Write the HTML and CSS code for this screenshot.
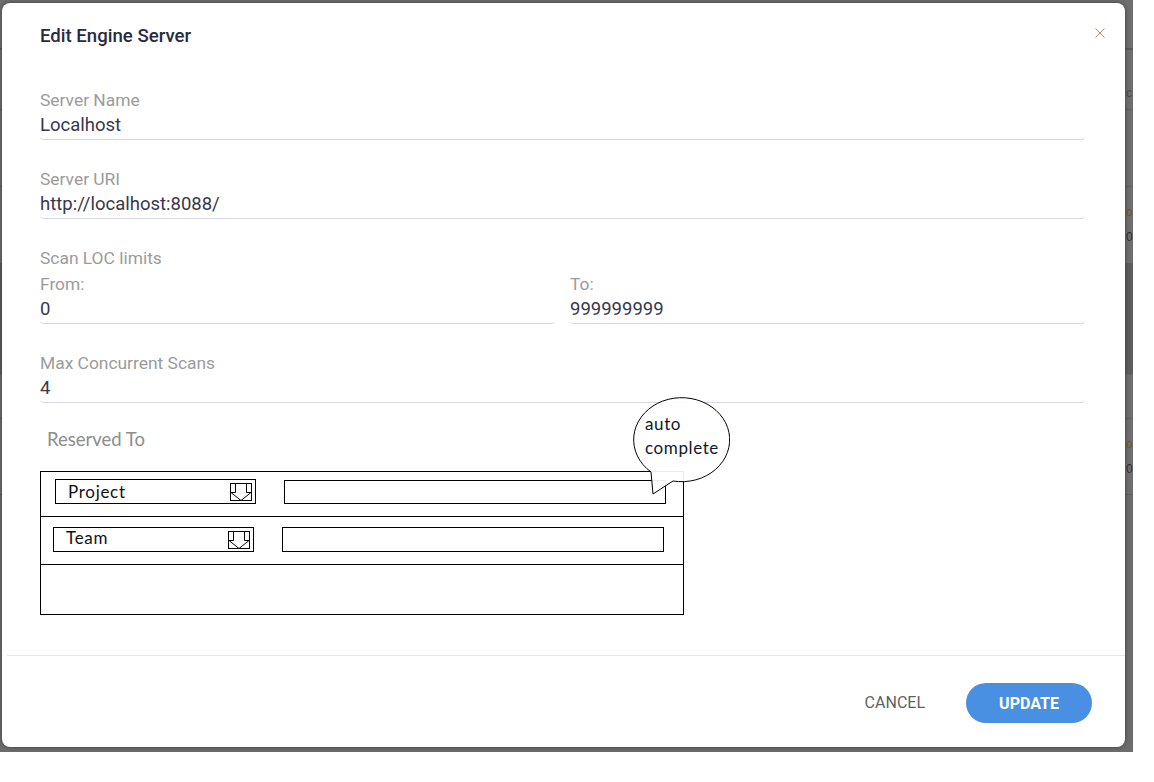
FILE: index.html
```html
<!DOCTYPE html>
<html lang="en">
<head>
<meta charset="utf-8">
<title>Edit Engine Server</title>
<link rel="stylesheet" href="styles.css">
</head>
<body>
<div class="screen">
  <div class="page">
    <div class="pg-head"></div>
    <div class="pg-row pg-r1"><span class="pg-gap"></span><span class="pg-txt t-gray">c</span></div>
    <div class="pg-row pg-r2"></div>
    <div class="pg-row pg-r3"><span class="pg-gap"></span><span class="pg-txt"><span class="t-or">o</span><br><span class="t-bl">0</span></span></div>
    <div class="pg-dark"></div>
    <div class="pg-row pg-r4"></div>
    <div class="pg-row pg-r5"><span class="pg-gap"></span><span class="pg-txt"><span class="t-or">o</span><br><span class="t-bl">0</span></span></div>
  </div>

  <div class="dialog">
    <div class="dlg-head">
      <h2 class="dlg-title">Edit Engine Server</h2>
      <button class="dlg-close" aria-label="Close">
        <svg width="10" height="10" viewBox="0 0 10 10"><path d="M0.5 0.5 L9.5 9.5 M9.5 0.5 L0.5 9.5" stroke="#bf8a68" stroke-width="1" fill="none"/></svg>
      </button>
    </div>

    <div class="dlg-body">
      <div class="field">
        <div class="f-label">Server Name</div>
        <div class="f-input">Localhost</div>
      </div>
      <div class="field">
        <div class="f-label">Server URI</div>
        <div class="f-input">http://localhost:8088/</div>
      </div>
      <div class="field">
        <div class="f-label">Scan LOC limits</div>
        <div class="f-cols">
          <div class="f-col">
            <div class="f-sublabel">From:</div>
            <div class="f-input">0</div>
          </div>
          <div class="f-col">
            <div class="f-sublabel">To:</div>
            <div class="f-input">999999999</div>
          </div>
        </div>
      </div>
      <div class="field">
        <div class="f-label">Max Concurrent Scans</div>
        <div class="f-input">4</div>
      </div>

      <div class="reserved">
        <div class="res-label">Reserved To</div>
        <div class="wire">
          <div class="w-row w-row1">
            <div class="w-select"><span class="w-sel-text">Project</span>
              <svg class="w-arrow" width="22" height="18" viewBox="0 0 22 18"><rect x="0.5" y="0.5" width="21" height="17" fill="none" stroke="#000"/><path d="M5.5 1 V9.5 H1 L11 17.5 L21 9.5 H16.5 V1" fill="none" stroke="#000"/></svg>
            </div>
            <div class="w-text"></div>
          </div>
          <div class="w-row w-row2">
            <div class="w-select"><span class="w-sel-text up">Team</span>
              <svg class="w-arrow" width="22" height="18" viewBox="0 0 22 18"><rect x="0.5" y="0.5" width="21" height="17" fill="none" stroke="#000"/><path d="M5.5 1 V9.5 H1 L11 17.5 L21 9.5 H16.5 V1" fill="none" stroke="#000"/></svg>
            </div>
            <div class="w-text"></div>
          </div>
          <div class="w-row w-row3"></div>
        </div>
        <div class="bubble">
          <svg width="100" height="100" viewBox="0 0 100 100"><path d="M21 76 L23 98 L43 85 A48 42 0 1 0 21 76 Z" fill="rgba(255,255,255,0.92)" stroke="#000" stroke-width="1"/></svg>
          <div class="bubble-text">auto<br>complete</div>
        </div>
      </div>
    </div>

    <div class="dlg-foot">
      <button class="btn-cancel">CANCEL</button>
      <button class="btn-update">UPDATE</button>
    </div>
  </div>
</div>
</body>
</html>
```

FILE: styles.css
```css
html, body {
  margin: 0;
  padding: 0;
  background: #ffffff;
}

.screen {
  position: relative;
  width: 1133px;
  height: 752px;
  background: #6c6c6c;
  overflow: hidden;
}

/* dimmed page behind the modal */
.page {
  width: 1133px;
  font-family: "Liberation Sans", Arial, sans-serif;
  font-size: 12px;
}
.pg-head {
  height: 48px;
  background: #6e6e6e;
  border-bottom: 2px solid #5a5a5a;
}
.pg-row {
  display: flex;
  border-bottom: 1px solid #5e5e5e;
  background: #6e6e6e;
}
.pg-gap {
  flex: 0 0 1126px;
}
.pg-txt {
  line-height: 25px;
  white-space: nowrap;
}
.pg-r1 { height: 59px; }
.pg-r1 .pg-txt { line-height: 16px; padding-top: 35px; }
.pg-r2 { height: 76px; }
.pg-r3 { height: 63px; padding-top: 13px; }
.pg-dark {
  height: 110px;
  background: #5d5d5d;
}
.pg-r4 { height: 43px; border-top: 1px solid #666; }
.pg-r5 { height: 62px; padding-top: 13px; }
.t-gray { color: #474747; }
.t-or { color: #7a5428; }
.t-bl { color: #2a2e3a; }

/* dialog */
.dialog {
  position: absolute;
  left: 2px;
  top: 3px;
  width: 1123px;
  height: 744px;
  box-sizing: border-box;
  background: #ffffff;
  border-radius: 8px;
  box-shadow: 0 0 4px rgba(0, 0, 0, 0.45);
  display: flex;
  flex-direction: column;
  font-family: Roboto, "Liberation Sans", sans-serif;
}

.dlg-head {
  display: flex;
  align-items: center;
  justify-content: space-between;
  padding: 21px 20px 0 38px;
  height: 24px;
  box-sizing: content-box;
}
.dlg-title {
  margin: 0;
  font-size: 18.6px;
  line-height: 24px;
  font-weight: 500;
  color: #2a2a40;
}
.dlg-close {
  border: 0;
  background: none;
  padding: 0;
  width: 10px;
  height: 10px;
  margin-bottom: 6px;
  display: flex;
}

.dlg-body {
  flex: 1;
  padding: 42px 40px 0 38px;
}

.field + .field {
  margin-top: 29px;
}
.f-label,
.f-sublabel {
  font-size: 17.4px;
  line-height: 20px;
  color: #9b9b9b;
}
.f-sublabel {
  margin-top: 6px;
}
.f-input {
  margin-top: 4px;
  font-size: 18.5px;
  line-height: 22px;
  color: #38384a;
  padding-bottom: 3px;
  border-bottom: 1px solid #d9d6e8;
  border-radius: 0 0 4px 4px;
}
.f-cols {
  display: grid;
  grid-template-columns: 1fr 1fr;
  column-gap: 15px;
}

/* wireframe "Reserved To" */
.reserved {
  position: relative;
  margin-top: 24px;
  font-family: Lato, "Open Sans", sans-serif;
}
.res-label {
  padding-left: 7px;
  font-size: 18.5px;
  line-height: 24px;
  color: #8d8d8d;
}
.wire {
  margin-top: 20px;
  width: 644px;
  box-sizing: border-box;
  border: 1px solid #000;
}
.w-row {
  display: flex;
  align-items: flex-start;
  gap: 28px;
  border-bottom: 1px solid #000;
}
.w-row1 {
  padding: 7px 0 0 14px;
  height: 37px;
}
.w-row2 {
  padding: 10px 0 0 12px;
  height: 37px;
}
.w-row3 {
  height: 49px;
  border-bottom: 0;
}
.w-select {
  width: 201px;
  height: 25px;
  box-sizing: border-box;
  border: 1px solid #000;
  display: flex;
  align-items: center;
  justify-content: space-between;
  padding: 0 3px 0 12px;
}
.w-sel-text {
  font-size: 17px;
  line-height: 23px;
  letter-spacing: 0.7px;
  color: #111;
}
.w-sel-text.up {
  margin-top: -4px;
}
.w-arrow {
  display: block;
}
.w-text {
  width: 382px;
  height: 24px;
  box-sizing: border-box;
  border: 1px solid #000;
}
.w-row1 .w-text {
  margin-top: 1px;
  height: 24px;
}
.w-row2 .w-text {
  height: 25px;
}

.bubble {
  position: absolute;
  left: 590px;
  top: -31px;
  width: 100px;
  height: 100px;
}
.bubble svg {
  display: block;
}
.bubble-text {
  position: absolute;
  left: 15px;
  top: 16px;
  font-size: 17px;
  line-height: 24px;
  letter-spacing: 0.6px;
  color: #10182a;
}

/* footer */
.dlg-foot {
  margin-left: 5px;
  border-top: 1px solid #e8e8e8;
  padding: 27px 33px 24px 0;
  display: flex;
  justify-content: flex-end;
  align-items: center;
  gap: 41px;
}
.btn-cancel {
  border: 0;
  background: none;
  padding: 0;
  font-family: Roboto, "Liberation Sans", sans-serif;
  font-size: 16px;
  color: #5f5f5f;
  line-height: 40px;
}
.btn-update {
  width: 126px;
  height: 40px;
  border: 0;
  border-radius: 20px;
  background: #4a90e2;
  color: #ffffff;
  font-family: Roboto, "Liberation Sans", sans-serif;
  font-size: 16px;
  font-weight: 700;
  padding: 0;
}
```
